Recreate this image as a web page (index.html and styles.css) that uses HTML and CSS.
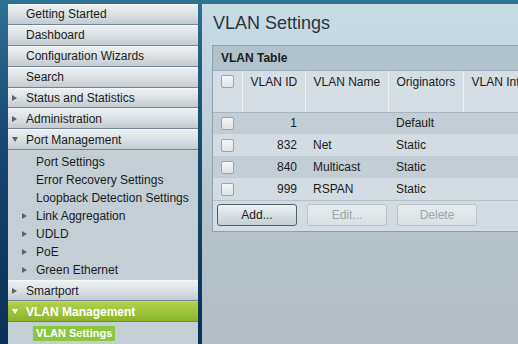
FILE: index.html
```html
<!DOCTYPE html>
<html>

<head>
    <title>VLAN Settings</title>
    <link rel="stylesheet" href="styles.css">
</head>

<body>
    <div class="page">
        <div class="sidebar">
            <div class="item"><span class="arrow"></span>Getting Started</div>
            <div class="item"><span class="arrow"></span>Dashboard</div>
            <div class="item"><span class="arrow"></span>Configuration Wizards</div>
            <div class="item"><span class="arrow"></span>Search</div>
            <div class="item"><span class="arrow"><i class="tri"></i></span>Status and Statistics</div>
            <div class="item"><span class="arrow"><i class="tri"></i></span>Administration</div>
            <div class="item"><span class="arrow"><i class="tri down"></i></span>Port Management</div>
            <div class="sub">
                <div class="sub-item"><span class="arrow"></span>Port Settings</div>
                <div class="sub-item"><span class="arrow"></span>Error Recovery Settings</div>
                <div class="sub-item"><span class="arrow"></span>Loopback Detection Settings</div>
                <div class="sub-item"><span class="arrow"><i class="tri"></i></span>Link Aggregation</div>
                <div class="sub-item"><span class="arrow"><i class="tri"></i></span>UDLD</div>
                <div class="sub-item"><span class="arrow"><i class="tri"></i></span>PoE</div>
                <div class="sub-item"><span class="arrow"><i class="tri"></i></span>Green Ethernet</div>
            </div>
            <div class="item"><span class="arrow"><i class="tri"></i></span>Smartport</div>
            <div class="item active"><span class="arrow"><i class="tri down"></i></span>VLAN Management</div>
            <div class="sub last">
                <div class="sub-item"><span class="arrow"></span><span class="current">VLAN Settings</span></div>
            </div>
        </div>

        <div class="content">
            <h1>VLAN Settings</h1>
            <div class="panel">
                <div class="panel-title">VLAN Table</div>
                <table class="list">
                    <thead>
                        <tr>
                            <th class="col-check"><span class="check"></span></th>
                            <th class="col-id num">VLAN ID</th>
                            <th class="col-name">VLAN Name</th>
                            <th class="col-orig">Originators</th>
                            <th class="col-state">VLAN Interface State</th>
                        </tr>
                    </thead>
                    <tbody>
                        <tr>
                            <td><span class="check"></span></td>
                            <td class="num">1</td>
                            <td></td>
                            <td>Default</td>
                            <td></td>
                        </tr>
                        <tr>
                            <td><span class="check"></span></td>
                            <td class="num">832</td>
                            <td>Net</td>
                            <td>Static</td>
                            <td></td>
                        </tr>
                        <tr>
                            <td><span class="check"></span></td>
                            <td class="num">840</td>
                            <td>Multicast</td>
                            <td>Static</td>
                            <td></td>
                        </tr>
                        <tr>
                            <td><span class="check"></span></td>
                            <td class="num">999</td>
                            <td>RSPAN</td>
                            <td>Static</td>
                            <td></td>
                        </tr>
                    </tbody>
                </table>
                <div class="form-action-buttons">
                    <button>Add...</button>
                    <button disabled>Edit...</button>
                    <button disabled>Delete</button>
                </div>
            </div>
        </div>
    </div>
</body>

</html>
```

FILE: styles.css
```css
body {
    margin: 0;
    height: 344px;
    overflow: hidden;
    font-family: "Liberation Sans", Arial, sans-serif;
    font-size: 12px;
    color: #1b1b1b;
    background: linear-gradient(to bottom, #2f7292, #174a6e 40%, #0c2f55);
}

.page {
    display: flex;
    gap: 4px;
    height: 340px;
    padding: 4px 0 0 8px;
}

/* left menu */
.sidebar {
    width: 190px;
    flex-shrink: 0;
    display: flex;
    flex-direction: column;
    background-color: #c5cfd6;
}

.item {
    display: flex;
    align-items: center;
    height: 19px;
    border-top: 1px solid #f4f6f8;
    border-bottom: 1px solid #738592;
    background: linear-gradient(to bottom, #edf0f2, #d8dee2 55%, #c3cbd1);
}

.item.active {
    color: #fff;
    font-weight: bold;
    border-top-color: #c4dc6c;
    border-bottom-color: #6f8f22;
    background: linear-gradient(to bottom, #b2d04c, #9cc238 55%, #8bb42c);
}

.arrow {
    width: 18px;
    flex-shrink: 0;
    display: flex;
    align-items: center;
    padding-left: 4px;
    box-sizing: border-box;
}

.tri {
    width: 0;
    height: 0;
    border-left: 5px solid #59646b;
    border-top: 3.5px solid transparent;
    border-bottom: 3.5px solid transparent;
}

.tri.down {
    border-left: 3.5px solid transparent;
    border-right: 3.5px solid transparent;
    border-top: 5px solid #59646b;
    border-bottom: none;
}

.active .tri.down {
    border-top-color: #fff;
}

.sub {
    padding: 3px 0 1px;
    background-color: #c4ced5;
}

.sub.last {
    padding: 2px 0;
}

.sub-item {
    display: flex;
    align-items: center;
    height: 18px;
    padding-left: 10px;
}

.current {
    margin-left: -3px;
    padding: 1px 3px 2px;
    font-size: 11px;
    font-weight: bold;
    color: #fff;
    background-color: #8cc63f;
}

/* main area */
.content {
    flex: 1;
    min-width: 0;
    overflow: hidden;
    padding-left: 10px;
    background: linear-gradient(to bottom, #c8dce6, #c1d2dc 30%, #b6c3cb 60%, #b3bec6);
}

h1 {
    margin: 9px 0 11px 1px;
    font-size: 18px;
    font-weight: normal;
    line-height: 21px;
    color: #2a343d;
}

.panel {
    width: 420px;
    border: 1px solid #8fa0ab;
    background-color: #d3dce2;
}

.panel-title {
    height: 24px;
    line-height: 24px;
    padding-left: 8px;
    font-weight: bold;
    background-color: #b2c2cd;
    border-bottom: 1px solid #9badb8;
}

table.list {
    width: 100%;
    border-collapse: collapse;
    table-layout: fixed;
}

th,
td {
    padding: 0 8px;
    text-align: left;
    font-weight: normal;
    white-space: nowrap;
    overflow: hidden;
}

th {
    height: 41px;
    padding-top: 4px;
    box-sizing: border-box;
    vertical-align: top;
    background-color: #d5dee4;
    border-left: 1px solid #eef2f5;
    border-bottom: 1px solid #a5b4be;
}

th.col-check {
    border-left: none;
}

.col-check {
    width: 29px;
    padding-right: 0;
}

.col-id {
    width: 63px;
}

.col-name {
    width: 83px;
}

.col-orig {
    width: 75px;
}

.col-state {
    width: 170px;
}

td {
    height: 22px;
    box-sizing: border-box;
}

tbody tr:nth-child(odd) {
    background-color: #c2cdd5;
}

tbody tr:nth-child(even) {
    background-color: #d3dce2;
}

th.num,
td.num {
    text-align: right;
}

.check {
    display: block;
    width: 11px;
    height: 11px;
    border: 1px solid #98a5ad;
    border-radius: 2px;
    background: linear-gradient(to bottom, #f5f7f8, #dde2e6);
}

.form-action-buttons {
    display: flex;
    gap: 10px;
    padding: 3px 4px 5px;
    border-top: 1px solid #b3c0c9;
}

button {
    width: 80px;
    height: 22px;
    padding: 0;
    font-family: inherit;
    font-size: 12px;
    color: #1b1b1b;
    border: 1px solid #4f5f6a;
    border-radius: 3px;
    background: linear-gradient(to bottom, #eef2f4, #d3dbe0 60%, #c6d0d6);
}

button:disabled {
    color: #9aa5ad;
    border-color: #b8c3ca;
    background: linear-gradient(to bottom, #e6ebee, #dae1e5);
}
```
